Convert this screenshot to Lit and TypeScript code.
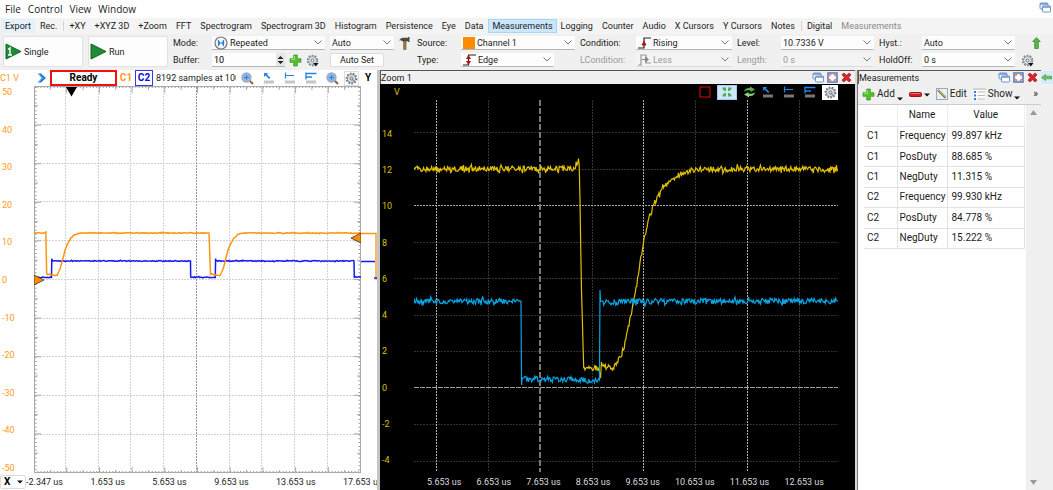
import { LitElement, html, css, svg, nothing } from "lit";
import { customElement } from "lit/decorators.js";

type Point = [number, number];

/** Small deterministic generator, so the traces look the same on each load. */
function noiseSource(seed: number) {
  let s = seed;
  return () => {
    s = (s * 1664525 + 1013904223) % 4294967296;
    return s / 4294967296 - 0.5;
  };
}

/** Joins the key points of a signal, adding noise to each sample. */
function trace(points: Point[], amp: number, seed: number, step = 1): string {
  const rnd = noiseSource(seed);
  const out: string[] = [];
  for (let i = 0; i < points.length - 1; i++) {
    const [x0, y0] = points[i];
    const [x1, y1] = points[i + 1];
    const n = Math.max(1, Math.round((x1 - x0) / step));
    for (let k = 0; k < n; k++) {
      const t = k / n;
      const a = k === 0 && Math.abs(y1 - y0) > 4 ? 0 : amp;
      const spike = rnd() > 0.4 ? 1.7 : 1;
      out.push(`${(x0 + (x1 - x0) * t).toFixed(2)},${(y0 + (y1 - y0) * t + rnd() * a * spike).toFixed(2)}`);
    }
  }
  const last = points[points.length - 1];
  out.push(`${last[0]},${last[1]}`);
  return out.join(" ");
}

const range = (n: number) => Array.from({ length: n }, (_, i) => i);

const icons = {
  restore: html`<svg width="12" height="11" viewBox="0 0 12 11"><rect x="1" y="1" width="8" height="6" rx="1" fill="#eef4fc" stroke="#6f93c8"/><path d="M1 2h8" stroke="#6f93c8" stroke-width="1.5"/><rect x="3.500" y="4" width="8" height="6" rx="1" fill="#fff" stroke="#6f93c8"/><path d="M3.500 5h8" stroke="#6f93c8" stroke-width="1.500"/></svg>`,
  maximize: html`<svg width="11" height="11" viewBox="0 0 11 11"><rect x="1" y="1" width="9" height="9" fill="#fff" stroke="#5a7fc0" stroke-width="1.600"/><path d="M2.300 2.300h2.500l-2.500 2.500zM8.700 2.300v2.500l-2.500-2.500zM2.300 8.700v-2.500l2.500 2.500zM8.700 8.700h-2.500l2.500-2.500z" fill="#e8502c"/></svg>`,
  close: html`<svg width="11" height="11" viewBox="0 0 11 11"><path d="M1 2.800L2.800 1 5.500 3.300 8.200 1 10 2.800 7.600 5.500 10 8.200 8.200 10 5.500 7.700 2.800 10 1 8.200 3.400 5.500z" fill="#d9272e" stroke="#a01319" stroke-width=".7"/></svg>`,
  play: html`<svg width="17" height="17" viewBox="0 0 17 17"><path d="M1 1L16 8.500 1 16z" fill="#1f8b34" stroke="#156325"/></svg>`,
  single: html`<svg width="17" height="17" viewBox="0 0 17 17"><path d="M1 1L16 8.500 1 16z" fill="#1f8b34" stroke="#156325"/><path d="M3 6.500L5 5v7M3 12h4" fill="none" stroke="#fff" stroke-width="1.400"/></svg>`,
  repeated: html`<svg width="14" height="14" viewBox="0 0 14 14"><circle cx="7" cy="7" r="6" fill="#f4f8fd" stroke="#777" stroke-width="1.200"/><path d="M4.500 4v6M9.500 4v6" stroke="#3b7bd0" stroke-width="1.200"/><path d="M5 5l2 2-2 2zM9 5L7 7l2 2z" fill="#3b7bd0"/></svg>`,
  swatch: html`<svg width="12" height="12" viewBox="0 0 12 12"><rect width="12" height="12" fill="#ff8c00"/></svg>`,
  edge: html`<svg width="13" height="12" viewBox="0 0 13 12"><path d="M0 11h5.500V1H13" fill="none" stroke="#222" stroke-width="1.200"/><path d="M3.500 4.500l2-2.500 2 2.500zM3.500 7.500l2 2.500 2-2.500z" fill="#b0141c" stroke="#b0141c"/></svg>`,
  rising: html`<svg width="13" height="12" viewBox="0 0 13 12"><path d="M0 11h6V1h7" fill="none" stroke="#222" stroke-width="1.200"/><path d="M4 8l2-3.500L8 8z" fill="#b0141c" stroke="#b0141c"/></svg>`,
  less: html`<svg width="13" height="12" viewBox="0 0 13 12"><path d="M0 11h3V1h5v8h5" fill="none" stroke="#999" stroke-width="1.200"/><path d="M4 5.500h5M7.500 3l3 2.500-3 2.500z" fill="#888" stroke="#888"/></svg>`,
  plus: html`<svg width="13" height="13" viewBox="0 0 13 13"><path d="M4.700 1h3.600v3.700H12v3.600H8.300V12H4.700V8.300H1V4.700h3.700z" fill="#58c02c" stroke="#3a9020" stroke-width=".7"/><path d="M5.500 2v3.500H2" fill="none" stroke="#a8e880" stroke-width=".8"/></svg>`,
  minus: html`<svg width="13" height="5" viewBox="0 0 13 5"><rect x=".5" y=".5" width="12" height="4" rx="1" fill="#cf1f2b" stroke="#a1121b"/><path d="M1.500 1.500h10" stroke="#ee8088" stroke-width=".8"/></svg>`,
  gear: html`<svg width="13" height="13" viewBox="0 0 13 13"><circle cx="6.500" cy="6.500" r="4.600" fill="#eef1f3" stroke="#78838b" stroke-width="2.200" stroke-dasharray="1.700 1.200"/><circle cx="6.500" cy="6.500" r="3.900" fill="#e7ebee" stroke="#87929a" stroke-width=".8"/><circle cx="6.500" cy="6.500" r="1.500" fill="#fff" stroke="#5b666e"/><path d="M7 9h5.500L9.800 12.500z" fill="#111"/></svg>`,
  plainGear: html`<svg width="13" height="13" viewBox="0 0 13 13"><circle cx="6.500" cy="6.500" r="4.800" fill="#eef1f3" stroke="#6b767e" stroke-width="2.200" stroke-dasharray="1.700 1.200"/><circle cx="6.500" cy="6.500" r="4" fill="#e7ebee" stroke="#77828a" stroke-width=".8"/><circle cx="6.500" cy="6.500" r="1.600" fill="#fff" stroke="#5b666e"/><path d="M6.500 6.500l2.500 3" stroke="#5b666e"/></svg>`,
  hammer: html`<svg width="11" height="13" viewBox="0 0 11 13"><path d="M4.500 4h2.600v8.500H4.500z" fill="#a37a4a" stroke="#6d4d28" stroke-width=".5"/><path d="M0 3.500Q2 .5 4 .7h5V0h1.500v5H9V4.200H3.500Q2 3 0 3.500z" fill="#4c4c44"/></svg>`,
  magnifier: html`<svg width="13" height="13" viewBox="0 0 13 13"><path d="M8.500 8.500l3.500 3.500" stroke="#87633e" stroke-width="2"/><circle cx="5.500" cy="5.500" r="4.500" fill="#86b6ea" stroke="#a5adb6" stroke-width="1.400"/><path d="M3.200 5.500h4.600M5.500 3.200v4.600" stroke="#3b7ccc"/></svg>`,
  cursor: html`<svg width="12" height="12" viewBox="0 0 12 12"><rect x="1" y="8.500" width="10" height="3" fill="var(--base, #c6c6c6)"/><path d="M1 1h4.200L3.900 2.300 7.500 6 6 7 2.600 3.600 1 5z" fill="#1f86e6"/></svg>`,
  leftCursor: html`<svg width="12" height="12" viewBox="0 0 12 12"><rect x="1" y="8.500" width="10" height="3" fill="var(--base, #c6c6c6)"/><path d="M1.500 .5v6M1.500 3.500H10" stroke="#1f86e6" stroke-width="1.200"/></svg>`,
  twoCursor: html`<svg width="12" height="12" viewBox="0 0 12 12"><rect x="1" y="8.500" width="10" height="3" fill="var(--base, #c6c6c6)"/><path d="M1 .5v7M1 1.500h10.500M1 5h6" stroke="#1f86e6" stroke-width="1.300"/></svg>`,
  chevrons: html`<svg width="10" height="10" viewBox="0 0 10 10"><path d="M1 .5h3L9 5 4 9.500H1L4.500 5z" fill="#1a78e0"/><path d="M1 .5L5.500 5 1 9.500" fill="none" stroke="#8cc0f5"/></svg>`,
  upArrow: html`<svg width="9" height="12" viewBox="0 0 9 12"><path d="M4.500 .6L8.300 4.500H6.300V11.500H2.700V4.500H.7z" fill="#58b848" stroke="#2c8030" stroke-width=".7"/></svg>`,
  leftArrow: html`<svg width="11" height="9" viewBox="0 0 11 9"><path d="M.6 4.500L4.500 1.500v1.700H11v2.600H4.500v1.700z" fill="#6cc25a" stroke="#4a9a48" stroke-width=".7"/></svg>`,
  redSquare: html`<svg width="12" height="12" viewBox="0 0 12 12"><rect x="1" y="1" width="10" height="10" fill="none" stroke="#c00808" stroke-width="1.200"/></svg>`,
  fit: html`<svg width="12" height="12" viewBox="0 0 12 12"><path d="M1.500 1.500h3.500v3.500H3.500L1.500 3zM10.500 1.500v1.500L8.500 5H7V1.500zM1.500 10.500V9l2-2H5v3.500zM10.500 10.500H7V7h1.500l2 2z" fill="#4fac52"/></svg>`,
  refresh: html`<svg width="13" height="12" viewBox="0 0 13 12"><path d="M1 5.500Q2 1.500 7 2V.4L12 3.400 7.500 6V4.500Q4 3.800 1 5.500z" fill="#57b04c"/><path d="M12 6.500Q11 10.500 6 10v1.600L1 8.600 5.500 6v1.500Q9 8.200 12 6.500z" fill="#8fcf7e"/></svg>`,
  edit: html`<svg width="12" height="12" viewBox="0 0 12 12"><rect x=".5" y=".5" width="11" height="11" fill="#e6eff6" stroke="#9ab"/><path d="M2 2l7.500 7.500" stroke="#3c4043" stroke-width="2"/><path d="M2 1.600l7.600 7.600" stroke="#e8cf58" stroke-width="1.200"/></svg>`,
  show: html`<svg width="13" height="12" viewBox="0 0 13 12"><path d="M0 0h13v12H0z" fill="#fbfbfb"/><path d="M0 1h13" stroke="#aaa"/><path d="M1 3h2v2H1zM1 6.500h2v2H1zM1 10h2v2H1z" fill="#2f78d8"/><path d="M4.500 4H12M4.500 7.500H12M4.500 11H12" stroke="#bbb"/></svg>`,
  caret: html`<svg width="6" height="4" viewBox="0 0 6 4"><path d="M0 .5h6L3 3.500z" fill="#111"/></svg>`,
};

const TABS: (string | null)[] = [
  "Export", "Rec.", null, "+XY", "+XYZ 3D", "+Zoom", "FFT", "Spectrogram", "Spectrogram 3D", "Histogram",
  "Persistence", "Eye", "Data", "Measurements", "Logging", "Counter", "Audio", "X Cursors", "Y Cursors", "Notes",
  null, "Digital",
];

const base = css`
  :host { display: block; font-family: Roboto, "Noto Sans", sans-serif; font-size: 9px; line-height: 12px; color: #1c1c1c; }
  * { box-sizing: border-box; }
  svg { display: block; flex: none; }
  button { font: inherit; color: inherit; border: 0; background: none; padding: 0; margin: 0; display: flex; align-items: center; white-space: nowrap; }
`;

@customElement("title-bar")
class TitleBar extends LitElement {
  static properties = { label: {} };
  declare label: string;
  static styles = [base, css`
    .bar { display: flex; align-items: center; gap: 3px; height: 14px; background: #f0f0f0; border-top: 1px solid #555; border-left: 1px solid #555; padding-right: 3px; }
    .name { flex: 1; }
  `];
  render() {
    return html`<div class="bar"><span class="name">${this.label}</span>
      <button aria-label="Restore">${icons.restore}</button>
      <button aria-label="Maximize">${icons.maximize}</button>
      <button aria-label="Close">${icons.close}</button></div>`;
  }
}

@customElement("trigger-bar")
class TriggerBar extends LitElement {
  static styles = [base, css`
    .bar { display: grid; grid-template-columns: 80px 80px 34px 113px 64px 13px 39px 114px 51px 96px 39px 93px 38px 93px 1fr;
      grid-template-rows: 14px 14px; row-gap: 3px; column-gap: 5px; padding: 2px 3px 3px; background: #f0f0f0; align-items: center; height: 36px; }
    .big { grid-row: 1 / 3; height: 31px; background: #fdfdfd; border: 1px solid #e2e2e2; border-radius: 2px; gap: 2px; padding-left: 1px; }
    .field { display: flex; align-items: center; height: 14px; background: #fdfdfd; border-bottom: 1px solid #b5b5b5; border-radius: 1px; padding-left: 2px; gap: 2px; min-width: 0; }
    .field.off { background: #f3f3f3; color: #999; border-color: #ddd; }
    .narrow { width: 93px; }
    select { appearance: none; flex: 1; min-width: 0; border: 0; outline: 0; padding: 0; font: inherit; color: inherit; opacity: 1; height: 13px;
      background: url("data:image/svg+xml,%3Csvg xmlns='http://www.w3.org/2000/svg' width='8' height='5'%3E%3Cpath d='M.5 .5L4 4 7.500 .5' fill='none' stroke='%23777'/%3E%3C/svg%3E") no-repeat right 3px center; }
    label.off { color: #999; }
    .buffer { display: flex; align-items: center; gap: 4px; }
    .spin { display: flex; width: 73px; height: 14px; background: #fdfdfd; border-bottom: 1px solid #b5b5b5; }
    input { flex: 1; min-width: 0; border: 0; padding: 0 0 0 2px; font: inherit; background: none; outline: 0; }
    .steps { background: #e6e6e6; width: 9px; display: flex; align-items: center; justify-content: center; }
    .set { width: 54px; height: 14px; background: #fdfdfd; border: 1px solid #ddd; border-radius: 2px; justify-content: center; }
    .end { display: flex; padding-left: 1px; }
    .push { margin-left: auto; padding-right: 9px; }
  `];
  private pick(id: string, value: string, icon: unknown = nothing, off = false, narrow = false) {
    return html`<div class="field ${off ? "off" : ""} ${narrow ? "narrow" : ""}">${icon}<select id=${id} aria-label=${id} ?disabled=${off}><option>${value}</option></select></div>`;
  }
  render() {
    return html`<div class="bar">
      <button class="big">${icons.single}Single</button>
      <button class="big">${icons.play}Run</button>
      <label for="mode">Mode:</label>${this.pick("mode", "Repeated", icons.repeated)}
      ${this.pick("auto", "Auto")}
      <button aria-label="Tools">${icons.hammer}</button>
      <label for="source">Source:</label>${this.pick("source", "Channel 1", icons.swatch)}
      <label for="condition">Condition:</label>${this.pick("condition", "Rising", icons.rising)}
      <label for="level">Level:</label>${this.pick("level", "10.7336 V")}
      <label for="hyst">Hyst.:</label>${this.pick("hyst", "Auto")}
      <div class="end"><button class="push" aria-label="Up">${icons.upArrow}</button></div>
      <label for="buffer">Buffer:</label>
      <div class="buffer"><div class="spin"><input id="buffer" value="10"><span class="steps"><svg width="7" height="10" viewBox="0 0 7 10"><path d="M.5 4L3.500 1l3 3zM.5 6l3 3 3-3z" fill="#222"/></svg></span></div>
        <button aria-label="Add buffer">${icons.plus}</button><button aria-label="Buffer options">${icons.gear}</button></div>
      <button class="set">Auto Set</button><span></span>
      <label for="type">Type:</label>${this.pick("type", "Edge", icons.edge, false, true)}
      <label class="off" for="lcondition">LCondition:</label>${this.pick("lcondition", "Less", icons.less, true)}
      <label class="off" for="length">Length:</label>${this.pick("length", "0 s", nothing, true)}
      <label for="holdoff">HoldOff:</label>${this.pick("holdoff", "0 s")}
      <div class="end"><button aria-label="Trigger options">${icons.gear}</button></div>
    </div>`;
  }
}

@customElement("scope-panel")
class ScopePanel extends LitElement {
  static styles = [base, css`
    :host { display: flex; flex-direction: column; background: #fff; min-width: 0; }
    .head { display: flex; align-items: center; height: 16px; }
    .unit { width: 37px; color: #ff9a20; }
    .ready { width: 67px; height: 16px; margin-left: 3px; border: 2px solid #f01010; text-align: center; font-weight: bold; font-size: 10px; color: #000; }
    .c1, .c2 { font-weight: bold; font-size: 10px; height: 16px; justify-content: center; width: 18px; color: #ff9a20; }
    .c2 { border: 1px solid #3838e0; color: #0a0ae0; }
    .info { flex: 1; margin-left: 3px; overflow: hidden; white-space: nowrap; }
    .tools { display: flex; align-items: center; gap: 9px; padding: 0 5px; }
    .boxed { border: 1px solid #ddd; width: 15px; height: 15px; justify-content: center; }
    .y { width: 18px; height: 15px; justify-content: center; font-weight: bold; font-size: 10px; color: #000; }
    .body { flex: 1; min-height: 0; display: grid; grid-template-columns: 34px minmax(0, 1fr) 16px; }
    .scale { display: flex; flex-direction: column; justify-content: space-between; color: #ff9a20; padding-left: 2px; }
    .plot { position: relative; min-height: 0; }
    .plot svg { position: absolute; inset: 0; width: 100%; height: 100%; }
    .foot { height: 16px; display: flex; align-items: center; }
    .x { width: 26px; height: 14px; border: 1px solid #ddd; border-radius: 2px; justify-content: space-between; padding: 0 2px 0 3px; font-weight: bold; font-size: 10px; color: #000; }
    .times { flex: 1; display: flex; justify-content: space-between; overflow: hidden; white-space: nowrap; }
    .last { width: 34px; overflow: hidden; }
  `];
  render() {
    const orange = trace([[34, 233], [45, 233], [45.8, 232], [46.7, 274], [57, 275.5], [60, 269], [62, 262], [65, 250], [68, 243], [71, 238], [75, 234.5], [81, 233], [209, 233], [210.5, 274], [220, 275.5], [223, 269], [225, 262], [228, 250], [231, 243], [234, 238], [238, 234.5], [245, 233], [361, 233]], 0.9, 11);
    const blue = trace([[34, 277.5], [51.5, 277.5], [51.8, 259], [52.5, 261], [190.5, 261], [190.7, 277], [215.3, 277.5], [215.6, 258.5], [216, 261], [354, 261], [354.3, 277], [361, 277]], 0.9, 5);
    return html`
      <div class="head"><span class="unit">C1 V</span>${icons.chevrons}<span class="ready">Ready</span>
        <button class="c1">C1</button><button class="c2">C2</button><span class="info">8192 samples at 100 MHz</span>
        <div class="tools"><button aria-label="Zoom">${icons.magnifier}</button><button aria-label="Cursor">${icons.cursor}</button><button aria-label="Left cursor">${icons.leftCursor}</button><button aria-label="Two cursors">${icons.twoCursor}</button><button aria-label="Fit">${icons.magnifier}</button></div>
        <button class="boxed" aria-label="Options">${icons.plainGear}</button><button class="y">Y</button></div>
      <div class="body">
        <div class="scale">${[50, 40, 30, 20, 10, 0, -10, -20, -30, -40, -50].map((v) => html`<span>${v}</span>`)}</div>
        <div class="plot"><svg viewBox="34 86 327 388" preserveAspectRatio="none">
          ${range(9).map((i) => svg`<path d="M34 ${124.5 + Math.round(i * 38.7)}H361" stroke="#d2d2d2" stroke-dasharray="2 1"/>`)}
          ${range(9).map((i) => svg`<path d="M${65.5 + Math.round(i * 32.7)} 87V473" stroke=${i === 4 ? "#999999" : "#d2d2d2"} stroke-dasharray="2 1"/>`)}
          ${range(11).map((i) => svg`<path d="M34 ${86.5 + i * 38.6}h7M361 ${86.5 + i * 38.6}h-7M34 ${105.8 + i * 38.6}h4M361 ${105.8 + i * 38.6}h-4M${34 + i * 32.7} 473v-6M${50.3 + i * 32.7} 473v-3M${34 + i * 32.7} 87v6M${50.3 + i * 32.7} 87v3" stroke="#aaa"/>`)}
          <path d="M35.500 87V473M359.500 87V473" stroke="#999" stroke-width="2" stroke-dasharray="1 2.860"/>
          <path d="M34 87H361M34 472H361" stroke="#999" stroke-width="2" stroke-dasharray="1 2.270"/>
          <path d="M34.500 86.500H360.500V472.500H34.500z" fill="none" stroke="#aaa"/>
          <polyline points=${blue} fill="none" stroke="#1818f0" stroke-width="1.500"/>
          <polyline points=${orange} fill="none" stroke="#ff9410" stroke-width="1.500"/>
          <path d="M66 87h11L71.500 96.500z" fill="#000"/>
          <path d="M34 275l10 5-10 5zM361 233v10l-10-5z" fill="#ff8c00" stroke="#333" stroke-width=".8"/></svg></div>
        <div class="plot"><svg viewBox="361 86 16 388" preserveAspectRatio="none">
          <path d="M361 233.500H376V280" fill="none" stroke="#ff9410" stroke-width="1.300"/><path d="M361 261.500H375M374 278h3" stroke="#1818f0" stroke-width="1.300"/></svg></div>
      </div>
      <div class="foot"><button class="x">X${icons.caret}</button>
        <div class="times">${["-2.347 us", "1.653 us", "5.653 us", "9.653 us", "13.653 us"].map((t) => html`<span>${t}</span>`)}<span class="last">17.653 us</span></div></div>`;
  }
}

@customElement("zoom-panel")
class ZoomPanel extends LitElement {
  static styles = [base, css`
    :host { display: flex; flex-direction: column; min-width: 0; background: #000; border-left: 3px solid #c4c4c4; border-right: 2px solid #d8d8d8; }
    .head { display: flex; align-items: center; height: 16px; padding: 0 17px 0 14px; color: #d8c000; gap: 9px; --base: #777; }
    .v { flex: 1; }
    .lit { background: #cfe6f8; width: 20px; height: 15px; justify-content: center; border: 1px solid #9ecbef; }
    .pair { display: flex; align-items: center; gap: 6px; }
    .gear { background: #fff; width: 16px; height: 15px; justify-content: center; }
    .body { flex: 1; min-height: 0; display: grid; grid-template-columns: 34px minmax(0, 1fr) 17px; }
    .scale { display: flex; flex-direction: column; justify-content: space-between; color: #d8c000; padding: 28px 0 8px 2px; }
    .plot { position: relative; min-height: 0; }
    .plot svg { position: absolute; inset: 0; width: 100%; height: 100%; }
    .times { height: 16px; display: flex; justify-content: space-between; align-items: center; color: #ddd; padding: 0 31px 0 47px; }
  `];
  render() {
    const yellow = trace([[414, 169], [572, 168.5], [577, 165], [578.5, 161], [579.2, 165], [580, 200], [580.6, 240], [581.5, 290], [582.5, 325], [583.7, 365], [585, 368], [599, 367.5], [600.5, 378], [601.5, 362], [603, 367], [613, 368], [617, 362], [621, 357], [625, 341], [629, 326], [633, 303], [636, 287], [640, 262], [643.5, 243], [648, 221], [654, 204], [662, 189], [672, 179], [680, 174], [692, 170], [702, 169], [838, 169]], 5.6, 77, 0.8);
    const blue = trace([[414, 301], [521, 301.5], [521.3, 355], [521.6, 385], [522, 379], [570, 379.5], [592, 381], [599.5, 380], [599.7, 341], [600, 290], [600.5, 303], [640, 301.5], [838, 301]], 5.6, 31, 0.8);
    return html`
      <title-bar label="Zoom 1"></title-bar>
      <div class="head"><span class="v">V</span>
        <div class="pair"><button aria-label="Stop">${icons.redSquare}</button><button class="lit" aria-label="Fit">${icons.fit}</button><button aria-label="Refresh">${icons.refresh}</button><button aria-label="Cursor">${icons.cursor}</button></div>
        <button aria-label="Left cursor">${icons.leftCursor}</button>
        <div class="pair"><button aria-label="Two cursors">${icons.twoCursor}</button><button class="gear" aria-label="Options">${icons.plainGear}</button></div></div>
      <div class="body">
        <div class="scale">${[14, 12, 10, 8, 6, 4, 2, 0, -2, -4].map((v) => html`<span>${v}</span>`)}</div>
        <div class="plot"><svg viewBox="414 100 424 374" preserveAspectRatio="none">
          ${range(10).filter((i) => i !== 2 && i !== 7).map((i) => svg`<path d="M414 ${132.5 + Math.round(i * 36.5)}H838" stroke="#303030" stroke-dasharray="2 1"/>`)}
          ${[488.5, 592.5, 695.5, 799.5].map((x) => svg`<path d="M${x} 100V472" stroke="#363636" stroke-dasharray="2 1"/>`)}
          ${[436.5, 643.5, 747.5].map((x) => svg`<path d="M${x} 100V472" stroke="#b0b0b0" stroke-dasharray="2 1"/>`)}
          <path d="M414 205.500H838" stroke="#a8a8a8" stroke-dasharray="2 1"/>
          <path d="M414 387.500H838" stroke="#a0a0a0" stroke-dasharray="5 1"/>
          <path d="M540 100V472" stroke="#777" stroke-width="2" stroke-dasharray="6 2"/>
          <polyline points=${yellow} fill="none" stroke="#e2c000" stroke-width="1.200"/>
          <polyline points=${blue} fill="none" stroke="#08a4e4" stroke-width="1.200"/></svg></div>
      </div>
      <div class="times">${[5, 6, 7, 8, 9, 10, 11, 12].map((n) => html`<span>${n}.653 us</span>`)}</div>`;
  }
}

@customElement("measurement-panel")
class MeasurementPanel extends LitElement {
  static styles = [base, css`
    :host { display: flex; flex-direction: column; background: #f0f0f0; min-width: 0; border-left: 1px solid #777; }
    .tools { display: flex; align-items: center; height: 20px; font-size: 10px; padding: 0 3px 0 4px; gap: 6px; }
    .tools button { gap: 2px; }
    .tools button > svg:last-child:not(:first-child) { align-self: flex-end; }
    .more { margin-left: auto; }
    .body { flex: 1; display: flex; background: #fff; border-top: 1px solid #ccc; padding-left: 6px; }
    .list { flex: 1; }
    table { border-collapse: collapse; width: 161px; font-size: 10px; table-layout: fixed; height: 144px; }
    th { font-weight: 400; padding: 0; border-right: 1px solid #eee; height: 21px; }
    td { padding: 0 0 0 4px; border: 1px solid #e2e2e2; white-space: nowrap; }
    td:first-child { border-left: 0; padding-left: 3px; }
    td:nth-child(2) { padding-left: 2px; }
    tbody tr { height: 20px; }
    .c { width: 33px; } .n { width: 50px; }
    .scroll { width: 15px; background: #f0f0f0; display: flex; flex-direction: column; justify-content: space-between; align-items: center; padding: 5px 0; }
  `];
  render() {
    const rows = [["C1", "Frequency", "99.897 kHz"], ["C1", "PosDuty", "88.685 %"], ["C1", "NegDuty", "11.315 %"], ["C2", "Frequency", "99.930 kHz"], ["C2", "PosDuty", "84.778 %"], ["C2", "NegDuty", "15.222 %"]];
    return html`
      <title-bar label="Measurements"></title-bar>
      <div class="tools"><button>${icons.plus}Add${icons.caret}</button><button aria-label="Remove">${icons.minus}${icons.caret}</button><button>${icons.edit}Edit</button><button>${icons.show}Show${icons.caret}</button><button class="more">»</button></div>
      <div class="body"><div class="list"><table>
        <thead><tr><th class="c"></th><th class="n">Name</th><th>Value</th></tr></thead>
        <tbody>${rows.map((r) => html`<tr>${r.map((c) => html`<td>${c}</td>`)}</tr>`)}</tbody></table></div>
        <div class="scroll"><svg width="7" height="5" viewBox="0 0 7 5"><path d="M0 5L3.500 0 7 5z" fill="#999"/></svg><svg width="7" height="5" viewBox="0 0 7 5"><path d="M0 0h7L3.500 5z" fill="#999"/></svg></div></div>`;
  }
}

@customElement("app-root")
class AppRoot extends LitElement {
  static styles = [base, css`
    :host { display: flex; flex-direction: column; height: 100vh; overflow: hidden; background: #f0f0f0; }
    .menu { display: flex; align-items: center; gap: 7px; height: 18px; padding: 0 2px 0 5px; background: #fff; font-family: "Open Sans", "Noto Sans", sans-serif; font-size: 10px; }
    .window { margin-left: auto; align-self: flex-start; padding-top: 2px; }
    .tabs { display: flex; align-items: center; height: 16px; padding-left: 1px; background: #f4f4f4; }
    .tab { height: 14px; padding: 0 4px; margin-right: 1px; }
    .export { background: #e5f1fb; }
    .active { background: #cce6fb; border: 1px solid #a8d4f5; padding: 0 3px; margin-right: 0; }
    .faded { color: #888; }
    .sep { width: 1px; height: 10px; margin: 0 1px; background: #d4d4d4; }
    .main { flex: 1; min-height: 0; display: grid; grid-template-columns: minmax(0, 377fr) minmax(0, 480fr) 184px 12px; }
    .side button { background: #d5ecfb; width: 12px; height: 13px; margin-top: 1px; overflow: hidden; }
  `];
  render() {
    return html`
      <nav class="menu">${["File", "Control", "View", "Window"].map((m) => html`<button>${m}</button>`)}<button class="window" aria-label="Restore window">${icons.restore}</button></nav>
      <div class="tabs">${TABS.map((t) => t === null
        ? html`<span class="sep"></span>`
        : html`<button class="tab ${t === "Measurements" ? "active" : ""} ${t === "Export" ? "export" : ""}">${t}</button>`)}<button class="tab faded">Measurements</button></div>
      <trigger-bar></trigger-bar>
      <div class="main"><scope-panel></scope-panel><zoom-panel></zoom-panel><measurement-panel></measurement-panel>
        <div class="side"><button aria-label="Collapse">${icons.leftArrow}</button></div></div>`;
  }
}
